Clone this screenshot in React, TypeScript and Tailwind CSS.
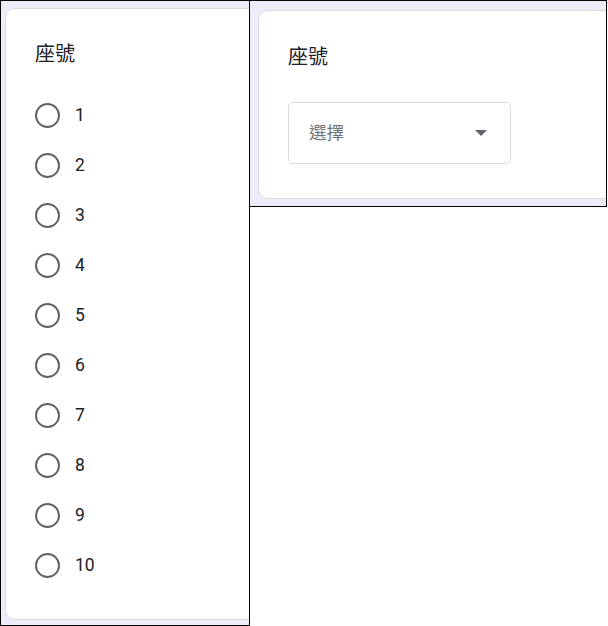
import React from 'react'

const font = { fontFamily: 'Roboto, "Noto Sans CJK TC", sans-serif' }

function RadioRow({ label }: { label: string }) {
  return (
    <div className="flex items-center h-[50px]">
      <span className="w-[25px] h-[25px] rounded-full border-2 border-[#5f6368] box-border shrink-0" />
      <span className="ml-[15px] text-[17.5px] leading-[24px] text-[#202124]">{label}</span>
    </div>
  )
}

export default function App() {
  const options = ['1', '2', '3', '4', '5', '6', '7', '8', '9', '10']

  return (
    <div className="flex items-start w-[608px] h-[626px] bg-white" style={font}>
      {/* radio version */}
      <div className="w-[250px] h-[626px] shrink-0 border border-black bg-[#f0ebf8] overflow-hidden pt-[7px] pl-[4px] box-border">
        <div className="w-[320px] h-[612px] bg-white border border-[#dadce0] rounded-[10px] pl-[29px] pt-[33px] box-border">
          <div className="text-[20px] leading-[24px] text-[#202124]">座號</div>
          <div className="mt-[24px]">
            {options.map((o) => (
              <RadioRow key={o} label={o} />
            ))}
          </div>
        </div>
      </div>

      {/* dropdown version */}
      <div className="w-[358px] h-[207px] shrink-0 -ml-px border border-black bg-[#f0ebf8] overflow-hidden pt-[9px] pl-[8px] box-border">
        <div className="w-[420px] h-[189px] bg-white border border-[#dadce0] rounded-[10px] pl-[29px] pt-[34px] box-border">
          <div className="text-[20px] leading-[24px] text-[#202124]">座號</div>
          <div className="mt-[33px] w-[223px] h-[62px] border border-[#dadce0] rounded-[5px] flex items-center justify-between pl-[20px] pr-[23px] box-border">
            <span className="text-[17.5px] text-[#70757a]">選擇</span>
            <span className="w-0 h-0 border-l-[6px] border-r-[6px] border-t-[6px] border-l-transparent border-r-transparent border-t-[#5f6368]" />
          </div>
        </div>
      </div>
    </div>
  )
}
